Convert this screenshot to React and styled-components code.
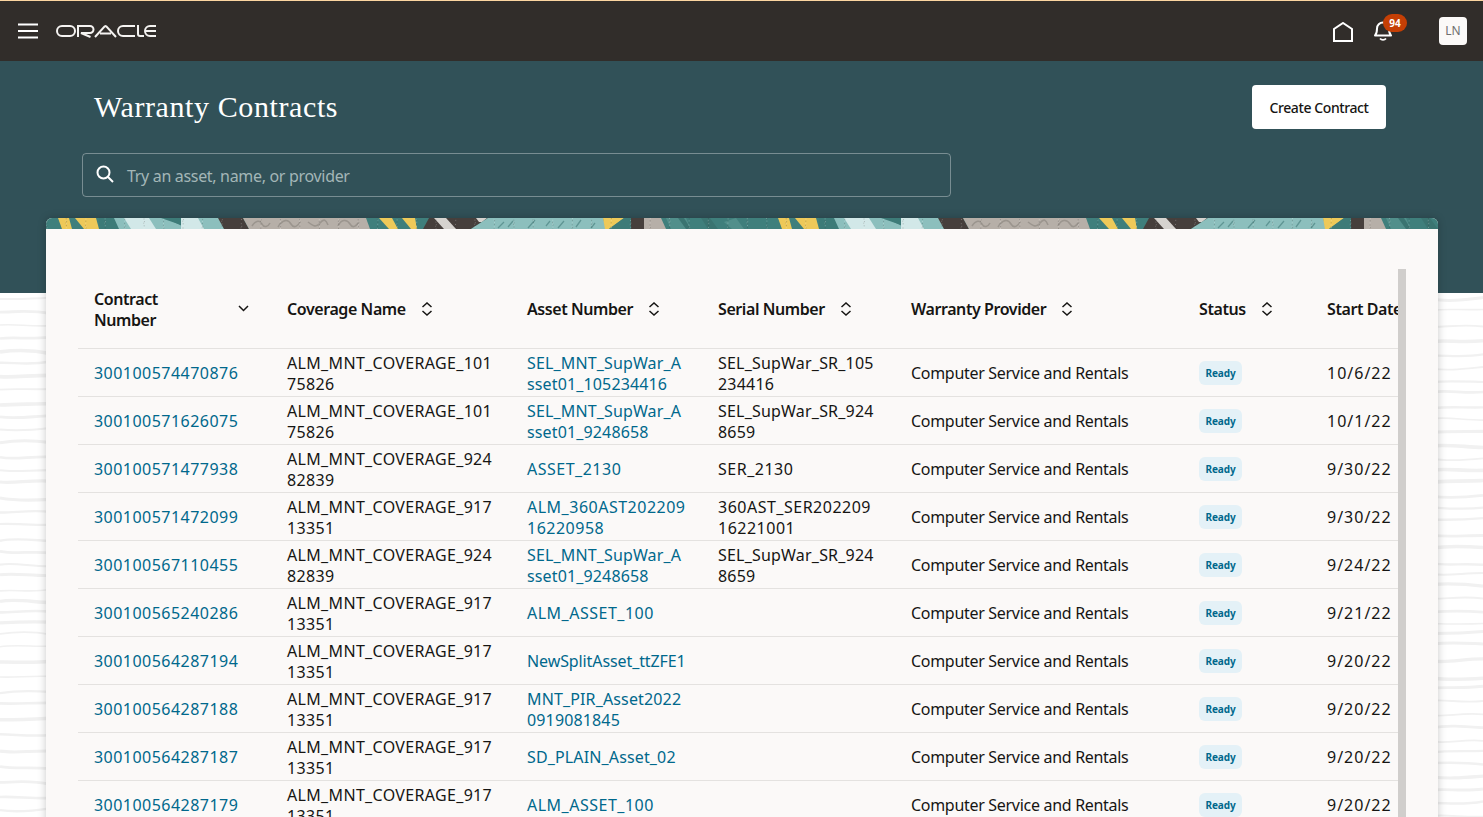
import React from "react";
import styled, { createGlobalStyle } from "styled-components";

const Global = createGlobalStyle`
  html, body { margin: 0; padding: 0; height: 100%; overflow: hidden; background: #fff; }
  body { font-family: "Noto Sans", "Liberation Sans", sans-serif; color: #161513; }
  #root { height: 100%; }
`;

const Page = styled.div`
  position: relative;
  height: 817px;
  overflow: hidden;
  background: #fff;
`;
const Waves = styled.svg`
  position: absolute;
  left: 0;
  top: 293px;
  width: 1483px;
  height: 524px;
`;
const Header = styled.header`
  position: relative;
  display: flex;
  align-items: center;
  height: 60px;
  padding: 0 16px 0 18px;
  background: #312d2a;
  border-top: 1px solid #fcd5a0;
`;
const Burger = styled.svg`
  width: 20px;
  height: 16px;
  margin-right: 18px;
  flex: none;
`;
const Logo = styled.svg`
  width: 100px;
  height: 14px;
  flex: none;
`;
const HeaderRight = styled.div`
  margin-left: auto;
  display: flex;
  align-items: center;
`;
const HomeIcon = styled.svg`
  width: 20px;
  height: 20px;
  margin-right: 21px;
  margin-top: 1px;
`;
const BellWrap = styled.div`
  position: relative;
  width: 18px;
  height: 20px;
  margin-right: 47px;
`;
const Badge = styled.span`
  position: absolute;
  left: 9px;
  top: -7px;
  width: 24px;
  height: 18px;
  border-radius: 9px;
  background: #c53f05;
  color: #fff;
  font-size: 10px;
  font-weight: 700;
  line-height: 18px;
  text-align: center;
`;
const Avatar = styled.div`
  width: 28px;
  height: 28px;
  border-radius: 4px;
  background: #fbf9f8;
  color: #6f6f6f;
  font-size: 12px;
  line-height: 28px;
  text-align: center;
`;
const Hero = styled.section`
  position: relative;
  height: 232px;
  box-sizing: border-box;
  padding: 24px 97px 0 82px;
  background: #315158;
`;
const HeroTop = styled.div`
  display: flex;
  justify-content: space-between;
  align-items: center;
  height: 44px;
  padding-left: 12px;
`;
const Title = styled.h1`
  margin: 0;
  color: #fff;
  font-family: "Liberation Serif", serif;
  font-size: 30px;
  font-weight: 400;
  letter-spacing: 0.6px;
  line-height: 44px;
`;
const CreateButton = styled.button`
  width: 134px;
  height: 44px;
  border: 0;
  border-radius: 4px;
  background: #fff;
  color: #161513;
  font-family: inherit;
  font-size: 14px;
  font-weight: 500;
  letter-spacing: -0.4px;
`;
const Search = styled.div`
  display: flex;
  align-items: center;
  gap: 13px;
  width: 869px;
  height: 44px;
  box-sizing: border-box;
  margin-top: 24px;
  padding-left: 13px;
  border: 1px solid rgba(255, 255, 255, 0.35);
  border-radius: 4px;
`;
const SearchIcon = styled.svg`
  width: 18px;
  height: 18px;
  flex: none;
  margin-top: -3px;
`;
const Placeholder = styled.span`
  padding-top: 2px;
  color: #a3b6b7;
  font-size: 16px;
  letter-spacing: -0.32px;
`;
const Card = styled.main`
  position: relative;
  margin: -75px 45px 0 46px;
  height: 640px;
  border-radius: 6px 6px 0 0;
  background: #fbf9f8;
  box-shadow: 0 0 8px rgba(0, 0, 0, 0.22);
  overflow: hidden;
`;
const Band = styled.svg`
  display: block;
  width: 1392px;
  height: 11px;
`;
const CardBody = styled.div`
  display: flex;
  align-items: flex-start;
  padding: 40px 32px 0 32px;
`;
const TableClip = styled.div`
  width: 1320px;
  flex: none;
  overflow: hidden;
`;
const Scrollbar = styled.div`
  width: 8px;
  height: 560px;
  flex: none;
  background: #d0cecc;
`;
const Table = styled.table`
  width: 1373px;
  table-layout: fixed;
  border-collapse: collapse;
`;
const Th = styled.th`
  height: 77px;
  padding: 2px 0 0 16px;
  border-bottom: 1px solid #e4e2e0;
  font-size: 16px;
  font-weight: 600;
  letter-spacing: -0.42px;
  line-height: 21px;
  text-align: left;
  vertical-align: middle;
  white-space: nowrap;
`;
const ThInner = styled.div`
  display: flex;
  align-items: center;
  gap: 15px;
`;
const ThLabel = styled.span`
  width: ${(p) => (p.$width ? `${p.$width}px` : "auto")};
  white-space: pre-line;
  flex: none;
`;
const SortIcon = styled.svg`
  width: 12px;
  height: 14px;
  flex: none;
  margin-top: -2px;
`;
const SortedIcon = styled.svg`
  width: 11px;
  height: 7px;
  flex: none;
  margin-top: -2px;
`;
const Td = styled.td`
  height: 45px;
  padding: 2px 0 0 16px;
  border-bottom: 1px solid #e4e2e0;
  font-size: 16px;
  letter-spacing: ${(p) => p.$spacing || 0}px;
  line-height: 21px;
  white-space: pre-line;
  vertical-align: middle;
  overflow: hidden;
`;
const CellLink = styled.a`
  color: #00688c;
  text-decoration: none;
`;
const Ready = styled.span`
  display: inline-block;
  width: 43px;
  height: 24px;
  margin-top: -2px;
  border-radius: 6px;
  background: #e4f1f7;
  color: #00688c;
  font-size: 10px;
  font-weight: 700;
  letter-spacing: -0.1px;
  line-height: 24px;
  text-align: center;
  vertical-align: middle;
`;

const columns = [193, 240, 191, 193, 288, 128, 140];
const headers = [
  "Coverage Name",
  "Asset Number",
  "Serial Number",
  "Warranty Provider",
  "Status",
];
const provider = "Computer Service and Rentals";
const rows = [
  ["300100574470876", "ALM_MNT_COVERAGE_101\n75826", "SEL_MNT_SupWar_A\nsset01_105234416", "SEL_SupWar_SR_105\n234416", "10/6/22"],
  ["300100571626075", "ALM_MNT_COVERAGE_101\n75826", "SEL_MNT_SupWar_A\nsset01_9248658", "SEL_SupWar_SR_924\n8659", "10/1/22"],
  ["300100571477938", "ALM_MNT_COVERAGE_924\n82839", "ASSET_2130", "SER_2130", "9/30/22"],
  ["300100571472099", "ALM_MNT_COVERAGE_917\n13351", "ALM_360AST202209\n16220958", "360AST_SER202209\n16221001", "9/30/22"],
  ["300100567110455", "ALM_MNT_COVERAGE_924\n82839", "SEL_MNT_SupWar_A\nsset01_9248658", "SEL_SupWar_SR_924\n8659", "9/24/22"],
  ["300100565240286", "ALM_MNT_COVERAGE_917\n13351", "ALM_ASSET_100", "", "9/21/22"],
  ["300100564287194", "ALM_MNT_COVERAGE_917\n13351", "NewSplitAsset_ttZFE1", "", "9/20/22", -0.1],
  ["300100564287188", "ALM_MNT_COVERAGE_917\n13351", "MNT_PIR_Asset2022\n0919081845", "", "9/20/22"],
  ["300100564287187", "ALM_MNT_COVERAGE_917\n13351", "SD_PLAIN_Asset_02", "", "9/20/22"],
  ["300100564287179", "ALM_MNT_COVERAGE_917\n13351", "ALM_ASSET_100", "", "9/20/22"],
];

const idSpacing = (text) => (/[a-z]/.test(text) ? 0.14 : 0.5);

function wavePaths() {
  const out = [];
  let seed = 7;
  const rnd = () => {
    seed = (seed * 9301 + 49297) % 233280;
    return seed / 233280;
  };
  const strips = [
    [0, 50],
    [1432, 1483],
  ];
  strips.forEach(([a, b]) => {
    for (let y = 6; y < 524; y += 10 + rnd() * 7) {
      const w = b - a;
      const d1 = (rnd() - 0.5) * 6;
      const d2 = (rnd() - 0.5) * 6;
      const d3 = (rnd() - 0.5) * 4;
      out.push({
        d: `M${a} ${y.toFixed(1)} C${a + w * 0.3} ${(y + d1).toFixed(1)} ${a + w * 0.6} ${(y + d2).toFixed(1)} ${b} ${(y + d3).toFixed(1)}`,
        w: 1.5 + rnd() * 2.2,
      });
    }
  });
  return out;
}
const waves = wavePaths();

const specks = Array.from({ length: 260 }, (_, i) => ({
  x: (i * 97.3) % 720,
  y: (i * 37.7) % 11,
  light: i % 2 === 0,
}));

function BandArt() {
  return (
    <Band viewBox="0 0 1392 11" preserveAspectRatio="none" aria-hidden="true">
      <defs>
        <pattern id="bandTile" width="720" height="11" patternUnits="userSpaceOnUse">
          <rect width="720" height="11" fill="#3f7f7c" />
          <polygon points="12,0 23,0 26,11 16,11" fill="#eec959" />
          <polygon points="29,0 50,0 53,11 38,11" fill="#eec959" />
          <polygon points="53,0 69,0 74,11 53,11" fill="#3d7b78" />
          <polygon points="68,0 80,0 86,11 73,11" fill="#8cbfbd" />
          <polygon points="78,0 104,0 111,11 85,11" fill="#d2e8e8" />
          <polygon points="103,0 120,0 136,8 136,11 110,11" fill="#8cbfbd" />
          <polygon points="115,0 135,0 135,7" fill="#3d7b78" />
          <polygon points="135,0 153,0 159,11 135,11" fill="#d2e8e8" />
          <polygon points="152,0 173,0 180,11 158,11" fill="#8cbfbd" />
          <polygon points="172,0 197,0 203,11 178,11" fill="#463f3c" />
          <polygon points="197,0 320,0 324,11 203,11" fill="#b6afa8" />
          <g fill="none" stroke="#9b958e" strokeWidth="1.6">
            <path d="M206 8c4-6 8-6 10-2s6 3 8-1M232 9c5-8 10-8 13-3s7 2 9-2M262 4c5 4 8 6 12 1s6-3 8 2M292 8c3-7 9-7 12-2s6 2 9-2" />
          </g>
          <polygon points="333,0 346,0 352,11 343,11" fill="#eec959" />
          <polygon points="356,0 369,0 371,11 365,11" fill="#eec959" />
          <polygon points="383,0 442,0 425,11 377,11" fill="#463f3c" />
          <polygon points="388,0 400,0 410,11 398,11" fill="#d6d3cf" />
          <polygon points="430,0 441,0 436,4 433,4" fill="#d6d3cf" />
          <polygon points="442,0 557,0 560,11 425,11" fill="#8cbfbd" />
          <g stroke="#5f9694" strokeWidth="1.3">
            <path d="M452 10l6-6M462 9l5-6M482 10l7-8M500 8l4-5M512 10l6-7M530 9l5-7M545 10l4-5" />
          </g>
          <polygon points="557,0 578,0 563,11 559,11" fill="#eec959" />
          <polygon points="578,0 585,0 585,11 563,11" fill="#3d7b78" />
          <rect x="585" y="0" width="13" height="11" fill="#463f3c" />
          <polygon points="598,0 615,0 620,11 598,11" fill="#b6afa8" />
          <polygon points="620,0 640,0 645,11 625,11" fill="#518f8b" />
          <polygon points="632,0 638,0 645,11 640,11" fill="#3a7471" />
          <polygon points="655,0 664,0 672,11 662,11" fill="#3a7471" />
          <polygon points="678,4 690,0 698,11 686,11" fill="#518f8b" />
          {specks.map((s, i) => (
            <rect key={i} x={s.x} y={s.y} width="1" height="1" fill={s.light ? "#fff" : "#222"} opacity="0.25" />
          ))}
        </pattern>
      </defs>
      <rect width="1392" height="11" fill="url(#bandTile)" />
    </Band>
  );
}

function SortGlyph() {
  return (
    <SortIcon viewBox="0 0 12 14" aria-hidden="true">
      <path d="M1.5 5 6 1l4.500 4M1.500 9 6 13l4.500-4" fill="none" stroke="#161513" strokeWidth="1.500" />
    </SortIcon>
  );
}

export default function App() {
  return (
    <Page>
      <Global />
      <Waves viewBox="0 0 1483 524" aria-hidden="true">
        {waves.map((w, i) => (
          <path key={i} d={w.d} fill="none" stroke="#f1f1f1" strokeWidth={w.w} />
        ))}
      </Waves>
      <Header>
        <Burger viewBox="0 0 20 16" aria-hidden="true">
          <path d="M0 1.500h20M0 8h20M0 14.500h20" stroke="#fff" strokeWidth="2" />
        </Burger>
        <Logo viewBox="0 0 100 14" aria-hidden="true">
          <g fill="none" stroke="#f5f3f1" strokeWidth="2">
            <rect x="1" y="2" width="18" height="10" rx="5" />
            <path d="M22 13V2h12a3.200 3.200 0 0 1 0 7H25l9.500 4" />
            <path d="M39 13l9.500-10.500 1-.5 1 .5L60 13M44 9.500h11" />
            <path d="M79 2H67a5 5 0 0 0 0 10h12" />
            <path d="M82 1v9a2 2 0 0 0 2 2h4" />
            <path d="M100 2h-6a5 5 0 0 0 0 10h6M90 7h10" />
          </g>
        </Logo>
        <HeaderRight>
          <HomeIcon viewBox="0 0 20 20" aria-hidden="true">
            <path d="M1 19V7l9-6 9 6v12z" fill="none" stroke="#fff" strokeWidth="2" />
          </HomeIcon>
          <BellWrap>
            <svg width="18" height="20" viewBox="0 0 18 20" aria-hidden="true">
              <path d="M1 14.500c2-2 2-4 2-7a6 6 0 0 1 12 0c0 3 0 5 2 7z" fill="none" stroke="#fff" strokeWidth="2" strokeLinejoin="round" />
              <path d="M6 17.500c1.500 1.800 4.500 1.800 6 0" fill="none" stroke="#fff" strokeWidth="1.800" />
            </svg>
            <Badge>94</Badge>
          </BellWrap>
          <Avatar>LN</Avatar>
        </HeaderRight>
      </Header>
      <Hero>
        <HeroTop>
          <Title>Warranty Contracts</Title>
          <CreateButton>Create Contract</CreateButton>
        </HeroTop>
        <Search>
          <SearchIcon viewBox="0 0 18 18" aria-hidden="true">
            <circle cx="7.500" cy="7.500" r="6" fill="none" stroke="#fff" strokeWidth="2" />
            <path d="M12 12l5 5" stroke="#fff" strokeWidth="2" />
          </SearchIcon>
          <Placeholder>Try an asset, name, or provider</Placeholder>
        </Search>
      </Hero>
      <Card>
        <BandArt />
        <CardBody>
          <TableClip>
            <Table>
              <colgroup>
                {columns.map((c, i) => (
                  <col key={i} width={c} />
                ))}
              </colgroup>
              <thead>
                <tr>
                  <Th>
                    <ThInner>
                      <ThLabel $width={129}>{"Contract\nNumber"}</ThLabel>
                      <SortedIcon viewBox="0 0 11 7" aria-hidden="true">
                        <path d="M1 1l4.500 4.500L10 1" fill="none" stroke="#161513" strokeWidth="1.500" />
                      </SortedIcon>
                    </ThInner>
                  </Th>
                  {headers.map((h) => (
                    <Th key={h}>
                      <ThInner>
                        <ThLabel>{h}</ThLabel>
                        <SortGlyph />
                      </ThInner>
                    </Th>
                  ))}
                  <Th>Start Date</Th>
                </tr>
              </thead>
              <tbody>
                {rows.map((r) => (
                  <tr key={r[0]}>
                    <Td $spacing={0.47}>
                      <CellLink href="#">{r[0]}</CellLink>
                    </Td>
                    <Td $spacing={0.33}>{r[1]}</Td>
                    <Td $spacing={r[5] ?? idSpacing(r[2])}>
                      <CellLink href="#">{r[2]}</CellLink>
                    </Td>
                    <Td $spacing={r[3].includes("SupWar") ? 0.2 : 0.5}>{r[3]}</Td>
                    <Td $spacing={-0.3}>{provider}</Td>
                    <Td>
                      <Ready>Ready</Ready>
                    </Td>
                    <Td $spacing={1}>{r[4]}</Td>
                  </tr>
                ))}
              </tbody>
            </Table>
          </TableClip>
          <Scrollbar />
        </CardBody>
      </Card>
    </Page>
  );
}
